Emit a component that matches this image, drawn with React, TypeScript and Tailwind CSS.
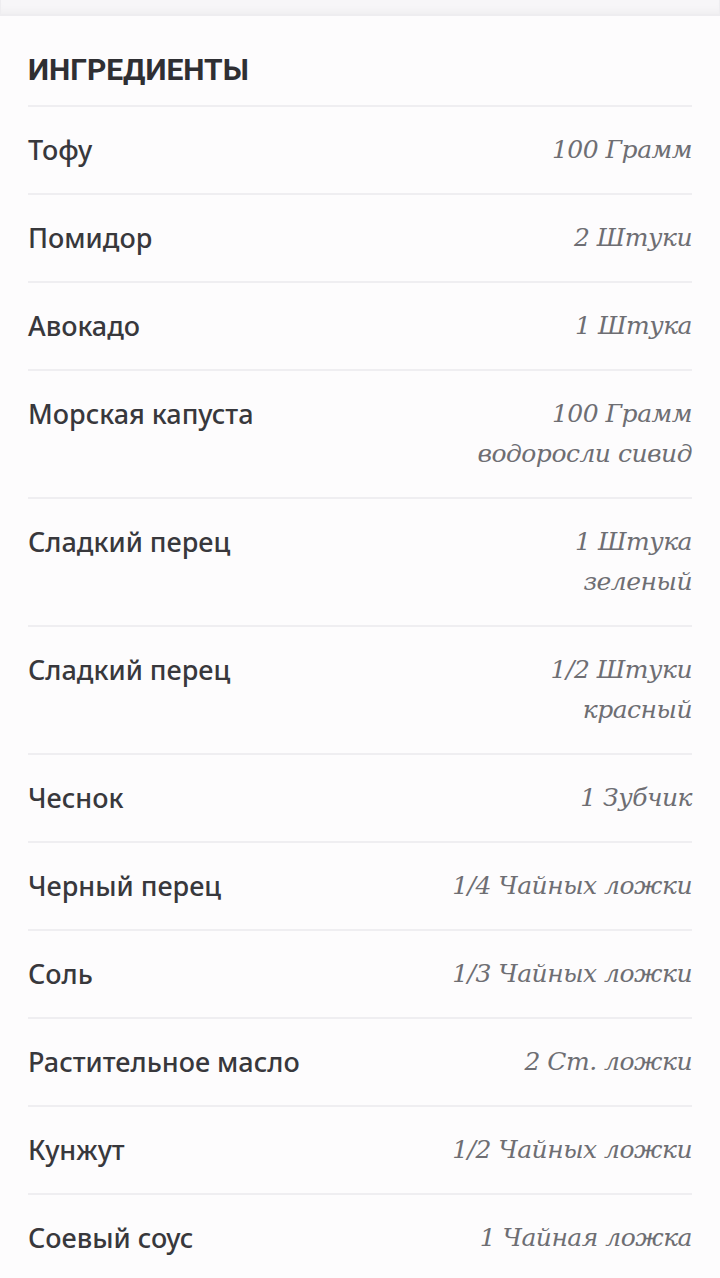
const items: { name: string; amount: string; note?: string }[] = [
  { name: "Тофу", amount: "100 Грамм" },
  { name: "Помидор", amount: "2 Штуки" },
  { name: "Авокадо", amount: "1 Штука" },
  { name: "Морская капуста", amount: "100 Грамм", note: "водоросли сивид" },
  { name: "Сладкий перец", amount: "1 Штука", note: "зеленый" },
  { name: "Сладкий перец", amount: "1/2 Штуки", note: "красный" },
  { name: "Чеснок", amount: "1 Зубчик" },
  { name: "Черный перец", amount: "1/4 Чайных ложки" },
  { name: "Соль", amount: "1/3 Чайных ложки" },
  { name: "Растительное масло", amount: "2 Ст. ложки" },
  { name: "Кунжут", amount: "1/2 Чайных ложки" },
  { name: "Соевый соус", amount: "1 Чайная ложка" },
]

export default function App() {
  return (
    <div className="min-h-[1278px] bg-[#fdfcfd] font-['Roboto',sans-serif]">
      {/* bottom edge of the card above */}
      <div className="h-[16px] border-x border-b-2 border-[#eeedf0] bg-[#f7f6f8] shadow-[inset_0_-8px_10px_-6px_rgba(0,0,0,0.04)]" />

      <section className="px-[28px] pt-[35px]">
        <h2 className="text-[30px] font-bold leading-[38px] text-[#2f2f33] pb-[16px]">ИНГРЕДИЕНТЫ</h2>

        <ul>
          {items.map((it, i) => (
            <li key={i} className="flex justify-between gap-4 border-t-2 border-[#efeef1] py-[23px]">
              <span className="text-[27px] font-medium leading-[40px] text-[#38383c] font-['Noto_Sans',sans-serif]">{it.name}</span>
              <span className="text-right text-[25px] italic leading-[40px] text-[#6e6e73] font-['DejaVu_Serif',serif] tracking-[-0.5px]">
                {it.amount}
                {it.note && (
                  <>
                    <br />
                    {it.note}
                  </>
                )}
              </span>
            </li>
          ))}
        </ul>
      </section>
    </div>
  )
}
